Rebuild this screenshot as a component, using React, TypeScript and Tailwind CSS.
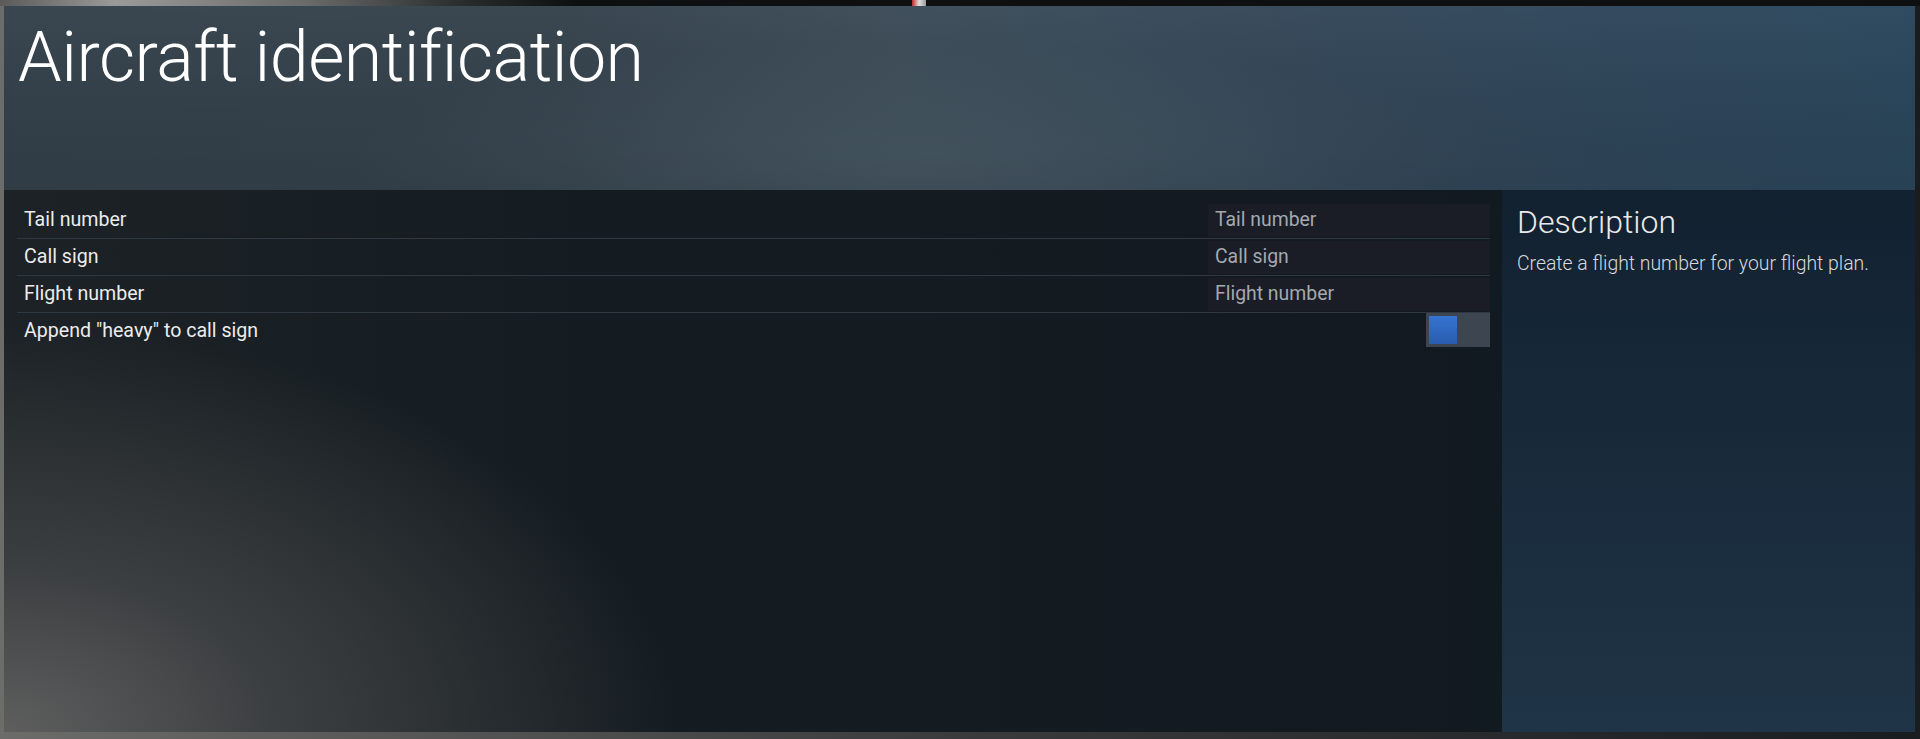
import React from "react";

const fields = ["Tail number", "Call sign", "Flight number"];

function FieldRow({ label }: { label: string }) {
  return (
    <div className="flex h-[37px] items-center border-b border-b-[#2e3840] pl-[7px]">
      <span className="flex-1 text-[19.6px] text-[#ececec]">{label}</span>
      <div className="flex h-[33px] w-[282px] items-center bg-[#1c1e26]/90 px-[7px] text-[19.4px] text-[#a4a9af]">
        {label}
      </div>
    </div>
  );
}

function ToggleRow({ label }: { label: string }) {
  return (
    <div className="flex h-[37px] items-start pl-[7px]">
      <span className="flex-1 pt-[3px] text-[19.6px] text-[#ececec]">{label}</span>
      <div className="flex h-[34px] w-[64px] items-center bg-[#3d4650] p-[3px]">
        <div className="h-[28px] w-[28px] bg-gradient-to-b from-[#3574d0] to-[#2a5cb0]" />
      </div>
    </div>
  );
}

export default function App() {
  return (
    <div
      className="flex h-[739px] w-full flex-col overflow-hidden bg-gradient-to-r from-[#6c6c6a] via-[#3a3b3c] to-[#1a1d20]"
      style={{ fontFamily: "Roboto, 'Noto Sans', sans-serif" }}
    >
      <div className="flex h-[6px] bg-[linear-gradient(to_right,#5a5a5a_0%,#9a9a9a_6%,#6a6a6a_16%,#2a2c2e_24%,#0d0f11_30%,#0d0f11_100%)]">
        <div className="ml-[912px] h-full w-[14px] bg-[linear-gradient(to_right,#c02a2a,#e0e0e0,#9a9a9a)]" />
      </div>
      <div className="flex flex-1 pb-[7px] pl-[4px] pr-[5px]">
        <div className="flex flex-1 flex-col">
          <header className="h-[184px] bg-[radial-gradient(ellipse_30%_60%_at_48%_80%,rgba(80,98,110,0.55)_0%,rgba(80,98,110,0)_100%),linear-gradient(to_right,#36434d_0%,#36444e_30%,#3d4d59_47%,#34485a_70%,#2c485e_100%)]">
            <div className="h-full bg-gradient-to-b from-white/[0.02] to-black/[0.1] pl-[14px] pt-[16px]">
              <h1 className="text-[70px] font-light leading-none tracking-[-0.5px] text-white">
                Aircraft identification
              </h1>
            </div>
          </header>
          <div className="flex flex-1">
            <main className="flex-1 bg-[radial-gradient(ellipse_45%_75%_at_0%_100%,#5e5e5e_0%,#3c3f41_40%,rgba(30,36,41,0)_100%),linear-gradient(to_right,#1c2226_0%,#151c21_40%,#121a21_100%)] pl-[13px] pr-[12px] pt-[12px]">
              {fields.map((f) => (
                <FieldRow key={f} label={f} />
              ))}
              <ToggleRow label={'Append "heavy" to call sign'} />
            </main>
            <aside className="w-[413px] bg-gradient-to-b from-[#122130] to-[#1f3446] pl-[15px] pt-[12px]">
              <h2 className="text-[32px] font-light leading-[40px] text-[#eaeaea]">Description</h2>
              <p className="mt-[7px] text-[19.4px] font-light text-[#d6dade]">
                Create a flight number for your flight plan.
              </p>
            </aside>
          </div>
        </div>
      </div>
    </div>
  );
}
